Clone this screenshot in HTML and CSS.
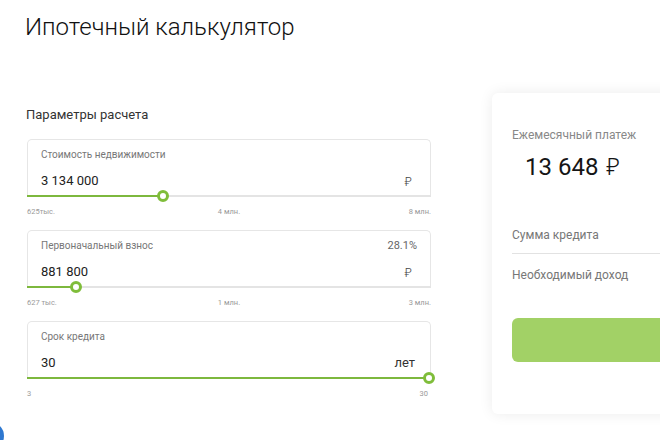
FILE: index.html
```html
<!DOCTYPE html>
<html lang="ru">
<head>
<meta charset="utf-8">
<title>Ипотечный калькулятор</title>
<link rel="stylesheet" href="styles.css">
</head>
<body>
<div class="page">
  <h1 class="title">Ипотечный калькулятор</h1>
  <div class="layout">
    <section class="params">
      <h2 class="section-title">Параметры расчета</h2>

      <div class="group">
        <div class="field">
          <div class="row-top"><span class="label">Стоимость недвижимости</span></div>
          <div class="row-value"><span class="value">3 134 000</span><span class="unit rub">₽</span></div>
          <div class="track"><div class="fill" style="width:33.7%"><span class="thumb"></span></div></div>
        </div>
        <div class="ticks"><span>625тыс.</span><span class="mid">4 млн.</span><span class="end">8 млн.</span></div>
      </div>

      <div class="group">
        <div class="field">
          <div class="row-top"><span class="label">Первоначальный взнос</span><span class="percent">28.1%</span></div>
          <div class="row-value"><span class="value">881 800</span><span class="unit rub">₽</span></div>
          <div class="track"><div class="fill" style="width:12.2%"><span class="thumb"></span></div></div>
        </div>
        <div class="ticks"><span>627 тыс.</span><span class="mid">1 млн.</span><span class="end">3 млн.</span></div>
      </div>

      <div class="group">
        <div class="field">
          <div class="row-top"><span class="label">Срок кредита</span></div>
          <div class="row-value"><span class="value">30</span><span class="unit">лет</span></div>
          <div class="track"><div class="fill" style="width:99.5%"><span class="thumb"></span></div></div>
        </div>
        <div class="ticks"><span>3</span><span class="mid"></span><span class="end end-inset">30</span></div>
      </div>
    </section>

    <aside class="result">
      <div class="result-label">Ежемесячный платеж</div>
      <div class="result-amount">13 648 <span class="amount-rub">₽</span></div>
      <div class="result-row divided">Сумма кредита</div>
      <div class="result-row">Необходимый доход</div>
      <button class="cta" type="button"></button>
    </aside>
  </div>
</div>
<div class="chat-bubble"></div>
</body>
</html>
```

FILE: styles.css
```css
html, body {
  margin: 0;
  padding: 0;
  background: #ffffff;
  overflow: hidden;
}

body {
  width: 660px;
  height: 440px;
  font-family: Roboto, "Noto Sans", "DejaVu Sans", sans-serif;
  color: #222;
}

.page {
  padding: 13px 0 0 27px;
}

.title {
  margin: 0 0 0 -2px;
  font-size: 24px;
  line-height: 28px;
  font-weight: 300;
  color: #111;
}

.layout {
  display: grid;
  grid-template-columns: 404px 240px;
  column-gap: 61px;
  margin-top: 52px;
  align-items: start;
}

.params {
  padding-top: 14px;
}

.section-title {
  margin: 0 0 16px -1px;
  font-size: 13px;
  line-height: 16px;
  font-weight: 400;
  color: #333;
}

.group {
  margin-bottom: 13px;
}

.field {
  position: relative;
  height: 48px;
  border: 1px solid #e6e6e6;
  border-bottom: none;
  border-radius: 5px 5px 0 0;
  padding: 8px 13px 0 13px;
  box-sizing: content-box;
  width: 376px;
}

.row-top {
  display: flex;
  justify-content: space-between;
  align-items: center;
  height: 14px;
}

.label {
  font-size: 10px;
  line-height: 14px;
  color: #777;
}

.percent {
  font-size: 11px;
  line-height: 14px;
  color: #666;
}

.row-value {
  display: flex;
  justify-content: space-between;
  align-items: center;
  margin-top: 10px;
  height: 18px;
}

.value {
  font-size: 13px;
  line-height: 18px;
  color: #222;
}

.unit {
  font-size: 13px;
  line-height: 18px;
  color: #333;
  margin-right: 2px;
}

.unit.rub {
  font-family: "Noto Sans", "DejaVu Sans", sans-serif;
  font-weight: 300;
  font-size: 13px;
  color: #444;
  margin-right: 5px;
}

.track {
  position: absolute;
  left: -1px;
  right: -1px;
  bottom: -1px;
  height: 2px;
  background: #e4e4e4;
}

.fill {
  position: relative;
  height: 100%;
  background: #7db83d;
}

.thumb {
  position: absolute;
  right: -6px;
  top: -5px;
  width: 6px;
  height: 6px;
  border: 3px solid #7fbd3a;
  border-radius: 50%;
  background: #fff;
}

.ticks {
  display: grid;
  grid-template-columns: 1fr 1fr 1fr;
  margin-top: 11px;
  font-size: 7.5px;
  line-height: 10px;
  color: #999;
}

.ticks .mid {
  text-align: center;
}

.ticks .end {
  text-align: right;
}

.ticks .end-inset {
  padding-right: 3px;
}

.result {
  background: #fff;
  border-radius: 6px;
  box-shadow: 0 0 14px rgba(0, 0, 0, 0.08);
  padding: 34px 0 52px 20px;
}

.result-label {
  font-size: 12px;
  line-height: 16px;
  color: #888;
}

.result-amount {
  margin: 9px 0 0 13px;
  font-size: 24px;
  line-height: 28px;
  color: #151515;
}

.amount-rub {
  font-family: "Noto Sans", "DejaVu Sans", sans-serif;
  font-weight: 300;
  font-size: 24px;
  margin-left: 2px;
}

.result-row {
  font-size: 12px;
  line-height: 16px;
  color: #777;
}

.result-row.divided {
  margin-top: 46px;
  padding-bottom: 10px;
  border-bottom: 1px solid #e2e2e2;
}

.result-row + .result-row {
  margin-top: 13px;
}

.cta {
  display: block;
  margin-top: 35px;
  width: 100%;
  height: 44px;
  border: none;
  border-radius: 6px 0 0 6px;
  background: #a2d166;
}

.chat-bubble {
  position: fixed;
  left: -24px;
  top: 422px;
  width: 28px;
  height: 28px;
  border-radius: 50%;
  background: #2e78d0;
}
```
